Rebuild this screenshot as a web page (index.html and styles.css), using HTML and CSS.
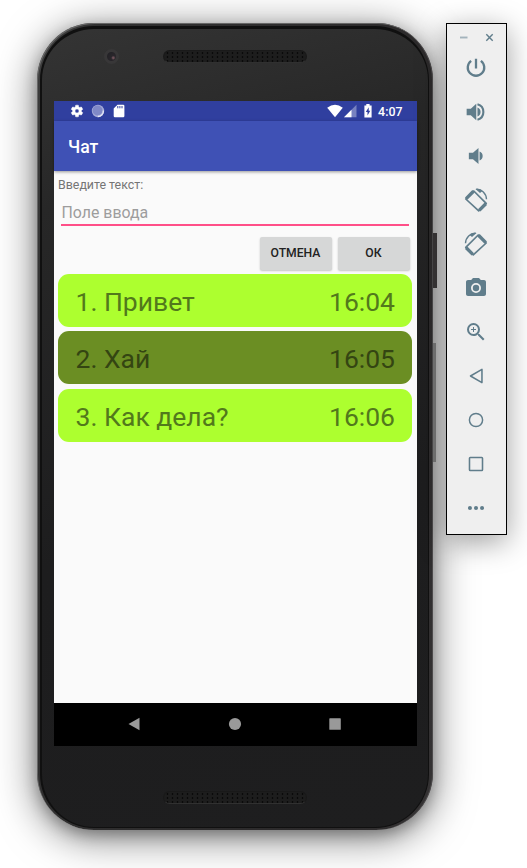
FILE: index.html
```html
<!DOCTYPE html>
<html lang="ru">
<head>
<meta charset="utf-8">
<title>Чат</title>
<link rel="stylesheet" href="styles.css">
</head>
<body>
<main class="desk">
  <section class="phone">
    <i class="key key-power"></i><i class="key key-volume"></i>
    <div class="bezel">
      <div class="top"><span class="camera"></span><span class="speaker"></span></div>
      <div class="screen">
        <div class="status">
          <svg class="gear" width="14" height="14" viewBox="0 0 24 24"><path fill="#fff" stroke="#fff" stroke-width=".8" d="M19.43 12.98c.04-.32.07-.64.07-.98s-.03-.66-.07-.98l2.11-1.65c.19-.15.24-.42.12-.64l-2-3.46c-.12-.22-.39-.3-.61-.22l-2.49 1c-.52-.4-1.08-.73-1.69-.98l-.38-2.65A.49.49 0 0 0 14 2h-4c-.25 0-.46.18-.49.42l-.38 2.65c-.61.25-1.17.59-1.69.98l-2.49-1c-.23-.09-.49 0-.61.22l-2 3.46c-.13.22-.07.49.12.64l2.11 1.65c-.04.32-.07.65-.07.98s.03.66.07.98l-2.11 1.65c-.19.15-.24.42-.12.64l2 3.46c.12.22.39.3.61.22l2.49-1c.52.4 1.08.73 1.69.98l.38 2.65c.03.24.24.42.49.42h4c.25 0 .46-.18.49-.42l.38-2.65c.61-.25 1.17-.59 1.69-.98l2.49 1c.23.09.49 0 .61-.22l2-3.46c.12-.22.07-.49-.12-.64zM12 15.5a3.5 3.5 0 1 1 0-7 3.500 3.500 0 0 1 0 7z"/></svg>
          <svg class="ball" width="14" height="14" viewBox="0 0 14 14"><circle cx="7" cy="7" r="6.200" fill="#a3a9d7"/><circle cx="6.500" cy="6.500" r="4.900" fill="#8089c7"/><path d="M12.400 6.500a5.600 5.600 0 0 1-5.600 6" fill="none" stroke="#e6e8f5" stroke-width="1.300"/></svg>
          <svg class="card" width="12" height="14" viewBox="0 0 12 14"><path fill="#fff" d="M4.500.8h5.700q1.200 0 1.200 1.200v10q0 1.300-1.200 1.300H1.900Q.7 13.300.7 12V4.600z"/><path stroke="#303f9f" d="M4.800 2v2.300M6.900 2v2.300M9 2v2.300"/></svg>
          <span class="grow"></span>
          <svg class="wifi" width="16" height="14" viewBox="0 0 16 14"><path fill="#fff" d="M.2 3.700Q8-2.300 15.800 3.700L8 13.300z"/></svg>
          <svg class="cell" width="13" height="14" viewBox="0 0 13 14"><path fill="#fff" fill-opacity=".35" d="M12.500.8v12.400H0z"/><path fill="#fff" d="M7.500 5.800v7.400H0z"/></svg>
          <svg class="battery" width="8" height="14" viewBox="0 0 8 14"><path fill="#fff" d="M2.300 0h3.300v1.400h2v12.100H.4V1.400h1.900z"/><path fill="#303f9f" d="M4.700 3.300 1.800 7.900h1.700v3.500l2.800-4.600H4.700z"/></svg>
          <time class="clock">4:07</time>
        </div>
        <header class="appbar">Чат</header>
        <div class="content">
          <label class="label">Введите текст:</label>
          <div class="field">Поле ввода</div>
          <div class="buttons"><button>ОТМЕНА</button><button>ОК</button></div>
          <div class="messages">
            <div class="msg"><span>1. Привет</span><time>16:04</time></div>
            <div class="msg dark"><span>2. Хай</span><time>16:05</time></div>
            <div class="msg"><span>3. Как дела?</span><time>16:06</time></div>
          </div>
        </div>
        <nav class="nav">
          <svg width="14" height="14" viewBox="0 0 14 14"><path fill="#999" d="M12.500.8v12.400L1.500 7z"/></svg>
          <svg width="14" height="14" viewBox="0 0 14 14"><circle cx="7" cy="7" r="6.100" fill="#999"/></svg>
          <svg width="14" height="14" viewBox="0 0 14 14"><rect x="1.300" y="1.300" width="11.500" height="11.500" rx=".6" fill="#999"/></svg>
        </nav>
      </div>
      <div class="bottom"><span class="speaker"></span></div>
    </div>
  </section>
  <aside class="tools">
    <div class="window">
      <svg width="9" height="9" viewBox="0 0 9 9"><path stroke="#a3b3bc" stroke-width="1.900" d="M1 4.500h7.500"/></svg>
      <svg width="9" height="9" viewBox="0 0 9 9"><path stroke="#607d8b" stroke-width="1.400" d="m1.300 1.300 6.400 6.400M7.700 1.300 1.300 7.700"/></svg>
    </div>
    <div class="tool"><svg viewBox="0 0 24 24"><path fill="none" stroke="currentColor" stroke-width="2.500" d="M12 2v10.500M6.700 4.200a9 9 0 1 0 10.600 0"/></svg></div>
    <div class="tool"><svg viewBox="0 0 24 24"><path fill="currentColor" d="M1.800 8.500v7h4.500l6 5.500V3l-6 5.500zM13.600 7.200v9.600a5.100 5.100 0 0 0 0-9.600z"/><path fill="none" stroke="currentColor" stroke-width="2.300" d="M13.600 3.600a8.700 8.700 0 0 1 0 16.800"/></svg></div>
    <div class="tool"><svg viewBox="0 0 24 24"><path fill="currentColor" d="M4.200 8.500v7h4.500l6 5.300V3.200l-6 5.300zM15.900 7.200v9.600a5.100 5.100 0 0 0 0-9.600z"/></svg></div>
    <div class="tool"><svg class="wide" viewBox="0 0 24 24"><g fill="none" stroke="currentColor"><path stroke-width="1.700" stroke-linejoin="round" d="m1.800 11 8-8L22.200 15.400l-7.500 7.500z"/><path stroke-width="3.400" d="m2.200 10.600 7.300-7.300M15.200 22.400l6.600-6.600"/><path stroke-width="1.400" d="M12.400 1.300c5.200-.4 9.900 4 10.100 9.900"/></g><path fill="currentColor" d="M11.400 1q3.800-.7 7 2l-2.400 2z"/></svg></div>
    <div class="tool"><svg class="wide mirror" viewBox="0 0 24 24"><g fill="none" stroke="currentColor"><path stroke-width="1.700" stroke-linejoin="round" d="m1.800 11 8-8L22.200 15.400l-7.500 7.500z"/><path stroke-width="3.400" d="m2.200 10.600 7.300-7.300M15.200 22.400l6.600-6.600"/><path stroke-width="1.400" d="M12.400 1.300c5.200-.4 9.900 4 10.100 9.900"/></g><path fill="currentColor" d="M11.400 1q3.800-.7 7 2l-2.400 2z"/></svg></div>
    <div class="tool"><svg class="wide" viewBox="0 0 24 24"><circle cx="12" cy="12" r="3.200" fill="currentColor"/><path fill="currentColor" d="M9 2 7.170 4H4c-1.100 0-2 .9-2 2v12c0 1.100.9 2 2 2h16c1.100 0 2-.9 2-2V6c0-1.100-.9-2-2-2h-3.170L15 2zm3 15a5 5 0 1 1 0-10 5 5 0 0 1 0 10z"/></svg></div>
    <div class="tool"><svg class="wide" viewBox="0 0 24 24"><path fill="currentColor" d="M15.500 14h-.79l-.28-.27A6.470 6.470 0 0 0 16 9.500 6.500 6.500 0 1 0 9.500 16c1.610 0 3.090-.59 4.230-1.570l.27.28v.79l5 4.990L20.490 19zm-6 0a4.500 4.500 0 1 1 0-9 4.500 4.500 0 0 1 0 9zm2.500-4h-2v2H9v-2H7V9h2V7h1v2h2z"/></svg></div>
    <div class="tool"><svg viewBox="0 0 24 24"><path fill="none" stroke="currentColor" stroke-width="1.700" stroke-linejoin="round" d="M18.500 4.800v14.400L6 12z"/></svg></div>
    <div class="tool"><svg viewBox="0 0 24 24"><circle cx="12" cy="12" r="7.200" fill="none" stroke="currentColor" stroke-width="1.600"/></svg></div>
    <div class="tool"><svg viewBox="0 0 24 24"><rect x="4.900" y="4.900" width="14.200" height="14.200" rx=".8" fill="none" stroke="currentColor" stroke-width="1.700"/></svg></div>
    <div class="tool"><svg viewBox="0 0 24 24"><path fill="none" stroke="currentColor" stroke-width="4.400" stroke-linecap="round" d="M5.400 12h0M12 12h0M18.600 12h0"/></svg></div>
  </aside>
</main>
</body>
</html>
```
FILE: styles.css
```css
* { box-sizing: border-box; }
body { margin: 0; background: #fff; font-family: Roboto, "Open Sans", sans-serif; }
svg { display: block; flex: none; }
.desk { height: 868px; overflow: hidden; display: flex; align-items: flex-start; gap: 13px; padding: 23px 0 0 37px; }

.phone {
  position: relative; flex: none; width: 396px; height: 807px; padding: 3px 4px 2px 3px;
  border-radius: 57px; background: linear-gradient(100deg, #3e3e3e, #303030 12%, #2c2a2b 80%, #353334);
  box-shadow: inset 1px 1px 0 #666, inset -1px 0 0 #4c4a4b, 0 7px 40px rgba(0, 0, 0, .55), 0 5px 14px rgba(0, 0, 0, .25);
}
.key { position: absolute; right: -4px; width: 4px; background: #393637; }
.key-power { top: 210px; height: 55px; }
.key-volume { top: 320px; height: 119px; right: -3px; width: 3px; background: #777; }
.bezel {
  height: 100%; border: 2px solid #101010; border-width: 3px 1px 1px 2px; border-radius: 54px;
  background: linear-gradient(165deg, #343434, #272727 20%, #1d1d1e 60%, #1e1e1f);
  padding: 0 11px 0 12px; display: flex; flex-direction: column;
}
.top { height: 72px; display: flex; padding: 19px 0 0 50px; align-items: flex-start; }
.camera {
  width: 15px; height: 15px; margin-top: 1px; border-radius: 50%; border: 3px solid #383738;
  background: radial-gradient(circle at 70% 65%, #6d5058 0 8%, #29262b 25%, #202024);
}
.speaker {
  width: 144px; height: 13px; border-radius: 7px; border: 1px solid #191919; border-bottom-color: #303030;
  background: radial-gradient(circle, #0a0a0a .7px, #1d1d1d 1.2px) 1px 0 / 5px 4px;
}
.top .speaker { margin: 2px 0 0 44px; }
.bottom { display: flex; padding: 45px 0 0 109px; }

.screen { width: 363px; height: 645px; background: #fafafa; display: flex; flex-direction: column; flex: none; }
.status { height: 20px; flex: none; background: #303f9f; display: flex; align-items: center; padding: 0 14.5px 0 16px; color: #fff; }
.ball { margin-left: 7px; }
.card { margin-left: 8px; }
.grow { flex: 1; }
.cell { margin-left: 1px; }
.battery { margin-left: 7px; }
.clock { margin-left: 6px; font-size: 12.4px; font-weight: 500; line-height: 21px; }
.appbar {
  height: 50px; flex: none; background: #3f51b5; color: #fff; font-size: 17.66px; font-weight: 500;
  line-height: 53px; padding-left: 14px; box-shadow: 0 1px 3px rgba(0, 0, 0, .4);
}
.content { flex: 1; padding: 4px; display: flex; flex-direction: column; }
.label { font-size: 12.4px; line-height: 20px; color: #757575; }
.field { margin: 3px 4px 0 3px; height: 28px; border-bottom: 2px solid #ff4f88; padding-left: .5px; font-size: 15.9px; line-height: 30px; color: #9d9d9d; }
.buttons { margin-top: 11px; display: flex; justify-content: flex-end; gap: 6px; padding-right: 3px; }
button {
  width: 72px; height: 33px; border: 0; border-radius: 2px; padding: 0 1px 0 0; background: #d6d7d7; color: #222;
  font: 500 12.2px/33px Roboto, sans-serif; box-shadow: 0 1px 2px rgba(0, 0, 0, .22);
}
.messages { margin-top: 4px; display: flex; flex-direction: column; gap: 4.8px; }
.msg {
  width: 354px; height: 52.7px; border-radius: 11px; background: #adff2f; color: #52791c;
  display: flex; justify-content: space-between; padding: 0 17px 0 17.5px; font-size: 26.5px; line-height: 55px;
}
.dark { background: #6b8e23; color: #344512; }
.nav { height: 43px; flex: none; background: #000; display: flex; justify-content: space-between; align-items: center; padding: 0 75px 1px 73px; }

.tools {
  position: relative; flex: none; width: 61px; height: 512px; border: 1px solid #000; background: #efefef; color: #607d8b;
  box-shadow: 0 7px 30px rgba(0, 0, 0, .38);
}
.window { height: 22px; padding: 9px 12.5px 0 12px; display: flex; justify-content: space-between; }
.tool { height: 44px; display: grid; place-items: center; padding-right: 1px; }
.tool svg { width: 22px; height: 22px; }
.tool .wide { width: 24px; height: 24px; }
.tool .mirror { transform: scaleX(-1); }
```
